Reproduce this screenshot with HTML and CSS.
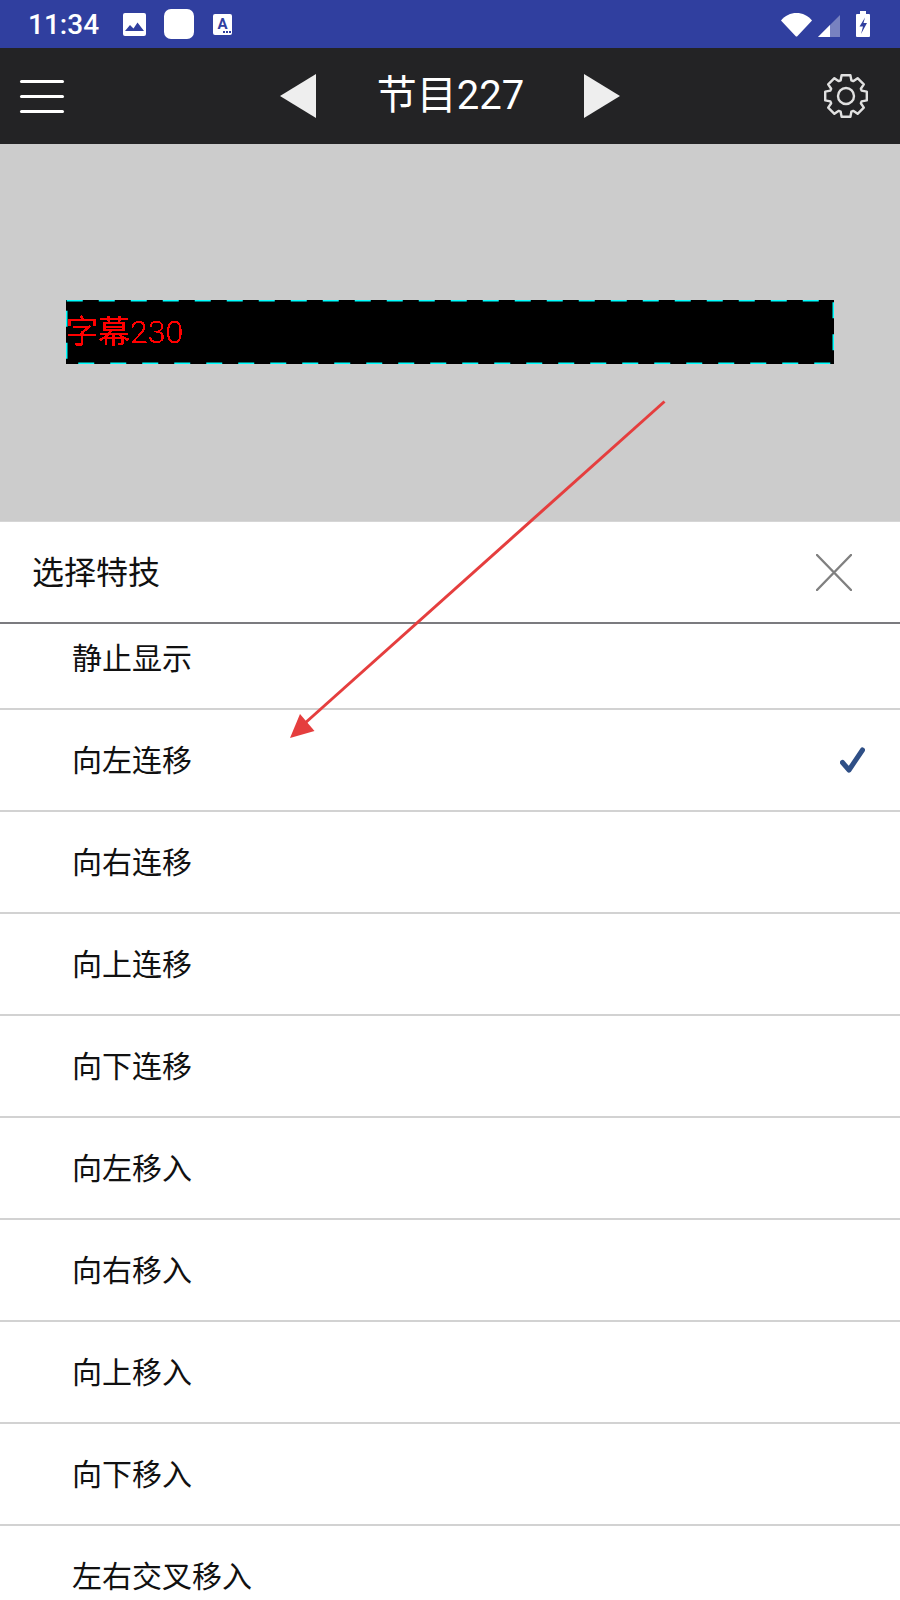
FILE: index.html
```html
<!DOCTYPE html>
<html>
<head>
    <title>选择特技</title>
    <meta charset="UTF-8">
    <meta name="viewport" content="width=device-width, initial-scale=1.0">
    <link rel="stylesheet" href="styles.css">
</head>
<body>
    <div class="phone">
        <div class="status-bar">
            <span class="clock">11:34</span>
            <svg class="icon-image" viewBox="0 0 23 23">
                <rect width="23" height="23" rx="2" fill="#fff"/>
                <path d="M2 18l5-6 3.500 3.500 4-6 6.500 8.500z" fill="#303f9f"/>
            </svg>
            <span class="white-square"></span>
            <svg class="icon-a" viewBox="0 0 19 21">
                <rect width="19" height="21" rx="2" fill="#fff"/>
                <text x="9.500" y="14.500" text-anchor="middle" class="icon-a-letter">A</text>
                <rect x="10" y="17" width="2" height="2" fill="#303f9f"/>
                <rect x="13" y="17" width="2" height="2" fill="#303f9f"/>
                <rect x="16" y="17" width="2" height="2" fill="#303f9f"/>
            </svg>
            <span class="status-right">
                <svg class="icon-wifi" viewBox="0 0 31 24">
                    <path d="M0 7.500C4 2.500 9.500 0 15.500 0S27 2.500 31 7.500L16.500 23q-1 1-2 0z" fill="#fff"/>
                </svg>
                <svg class="icon-signal" viewBox="0 0 22 22">
                    <path d="M22 0V22H0z" fill="#fff" opacity="0.35"/>
                    <path d="M12 10V22H0z" fill="#fff"/>
                </svg>
                <svg class="icon-battery" viewBox="0 0 14 26">
                    <path d="M4 0H10V3H13Q14 3 14 4V25Q14 26 13 26H1Q0 26 0 25V4Q0 3 1 3H4z" fill="#fff"/>
                    <path d="M9 6.500L3.500 15.500H7L5 23 11 12H7.500z" fill="#303f9f"/>
                </svg>
            </span>
        </div>

        <div class="toolbar">
            <div class="menu-btn">
                <span></span>
                <span></span>
                <span></span>
            </div>
            <div class="nav">
                <span class="arrow-left"></span>
                <span class="nav-title">节目227</span>
                <span class="arrow-right"></span>
            </div>
            <svg class="icon-gear" viewBox="-22 -22 44 44">
                <polygon points="-5.400,-15.600 -4.400,-20.800 4.400,-20.800 5.400,-15.600 7.210,-14.850 11.600,-17.820 17.820,-11.600 14.850,-7.210 15.600,-5.400 20.800,-4.400 20.800,4.400 15.600,5.400 14.850,7.210 17.820,11.600 11.600,17.820 7.210,14.850 5.400,15.600 4.400,20.800 -4.400,20.800 -5.400,15.600 -7.210,14.850 -11.600,17.820 -17.820,11.600 -14.850,7.210 -15.600,5.400 -20.800,4.400 -20.800,-4.400 -15.600,-5.400 -14.850,-7.210 -17.820,-11.600 -11.600,-17.820 -7.210,-14.850"/>
                <circle r="8"/>
            </svg>
        </div>

        <div class="stage">
            <div class="caption-box">
                <span class="caption-text">字幕<span class="caption-num">230</span></span>
                <svg class="caption-dash" viewBox="0 0 768 64">
                    <rect x="0.750" y="0.750" width="766.500" height="62.500"/>
                </svg>
            </div>
        </div>

        <div class="sheet">
            <div class="sheet-head">
                <span>选择特技</span>
                <svg class="icon-close" viewBox="0 0 36 37">
                    <path d="M1 1L35 36M35 1L1 36"/>
                </svg>
            </div>
            <div class="list-clip">
                <ul class="effect-list">
                    <li>静止显示</li>
                    <li>向左连移
                        <svg class="icon-check" viewBox="0 0 25 26">
                            <path d="M2.500 15.500L9 23 22.500 3"/>
                        </svg>
                    </li>
                    <li>向右连移</li>
                    <li>向上连移</li>
                    <li>向下连移</li>
                    <li>向左移入</li>
                    <li>向右移入</li>
                    <li>向上移入</li>
                    <li>向下移入</li>
                    <li>左右交叉移入</li>
                </ul>
            </div>
        </div>

        <!-- red arrow drawn over the screenshot -->
        <svg class="annotation" viewBox="0 0 900 1600">
            <line x1="664.500" y1="401.500" x2="304" y2="724"/>
            <polygon points="290,738 300,714 314.500,731"/>
        </svg>

        <svg class="filters" width="0" height="0">
            <filter id="hardEdge">
                <feComponentTransfer>
                    <feFuncA type="discrete" tableValues="0 1 1"/>
                </feComponentTransfer>
            </filter>
        </svg>
    </div>
</body>
</html>
```

FILE: styles.css
```css
* {
    box-sizing: border-box;
}
body {
    margin: 0;
    background: #fff;
    font-family: Roboto, "Noto Sans CJK SC", sans-serif;
}
svg {
    display: block;
}
.phone {
    position: relative;
    width: 900px;
    height: 1600px;
    overflow: hidden;
}

/* status bar */
.status-bar {
    display: flex;
    align-items: center;
    height: 48px;
    padding: 0 30px 0 28px;
    background: #303f9f;
    color: #fff;
}
.clock {
    font-size: 28px;
    font-weight: 500;
    width: 95px;
}
.icon-image {
    width: 23px;
    height: 23px;
    margin-right: 18px;
}
.white-square {
    width: 30px;
    height: 30px;
    border-radius: 7px;
    background: #fff;
    margin-right: 19px;
}
.icon-a {
    width: 19px;
    height: 21px;
}
.icon-a-letter {
    font-family: Roboto, sans-serif;
    font-size: 15px;
    font-weight: 700;
    fill: #303f9f;
}
.status-right {
    display: flex;
    align-items: flex-start;
    margin-left: auto;
}
.icon-wifi {
    width: 31px;
    height: 24px;
    margin-top: 2px;
    margin-right: 6px;
}
.icon-signal {
    width: 22px;
    height: 22px;
    margin-top: 4px;
    margin-right: 16px;
}
.icon-battery {
    width: 14px;
    height: 26px;
}

/* toolbar */
.toolbar {
    display: grid;
    grid-template-columns: 1fr auto 1fr;
    align-items: center;
    height: 96px;
    padding: 0 32px;
    background: #232325;
}
.menu-btn {
    display: flex;
    flex-direction: column;
    gap: 12px;
    width: 44px;
    margin-left: -12px;
}
.menu-btn span {
    height: 3px;
    border-radius: 2px;
    background: #fff;
}
.nav {
    display: flex;
    align-items: center;
}
.nav-title {
    width: 268px;
    padding-left: 1px;
    text-align: center;
    font-size: 40px;
    line-height: 56px;
    color: #fff;
}
.arrow-left {
    width: 36px;
    height: 44px;
    background: #eee;
    clip-path: polygon(100% 0, 100% 100%, 0 50%);
}
.arrow-right {
    width: 36px;
    height: 44px;
    background: #eee;
    clip-path: polygon(0 0, 100% 50%, 0 100%);
}
.icon-gear {
    width: 44px;
    height: 44px;
    justify-self: end;
    fill: none;
    stroke: #e0e0e0;
    stroke-width: 2.400;
    stroke-linejoin: round;
}

/* preview area */
.stage {
    height: 378px;
    padding: 156px 66px 0;
    background: #ccc;
    border-bottom: 1px solid #d6d6d6;
}
.caption-box {
    position: relative;
    width: 768px;
    height: 64px;
    background: #000;
}
.caption-text {
    display: block;
    font-size: 32px;
    line-height: 64px;
    color: #f00;
    filter: url(#hardEdge);
}
.caption-num {
    font-weight: 300;
}
.caption-dash {
    position: absolute;
    top: 0;
    left: 0;
    width: 768px;
    height: 64px;
    fill: none;
    stroke: #0ff;
    stroke-width: 1.500;
    stroke-dasharray: 16 16;
}

/* bottom sheet */
.sheet {
    background: #fff;
}
.sheet-head {
    display: flex;
    align-items: center;
    justify-content: space-between;
    height: 102px;
    padding: 0 48px 0 32px;
    border-bottom: 2px solid #7b7b7f;
    font-size: 32px;
    color: #111;
}
.sheet-head span {
    margin-bottom: 4px;
}
.icon-close {
    width: 36px;
    height: 37px;
    fill: none;
    stroke: #808080;
    stroke-width: 2.400;
    stroke-linecap: round;
}
.list-clip {
    overflow: hidden;
}
.effect-list {
    list-style: none;
    margin: -16px 0 0;
    padding: 0;
}
.effect-list li {
    position: relative;
    display: flex;
    align-items: center;
    height: 102px;
    padding: 0 0 4px 72px;
    border-bottom: 2px solid #d2d2d2;
    font-size: 30px;
    color: #111;
}
.icon-check {
    position: absolute;
    top: 37px;
    left: 840px;
    width: 25px;
    height: 26px;
    fill: none;
    stroke: #2f4f86;
    stroke-width: 5;
    stroke-linecap: round;
    stroke-linejoin: round;
}

.annotation {
    position: absolute;
    top: 0;
    left: 0;
    width: 900px;
    height: 1600px;
    fill: #e53e3e;
    stroke: none;
}
.annotation line {
    stroke: #e53e3e;
    stroke-width: 3;
}
.filters {
    position: absolute;
}
```
